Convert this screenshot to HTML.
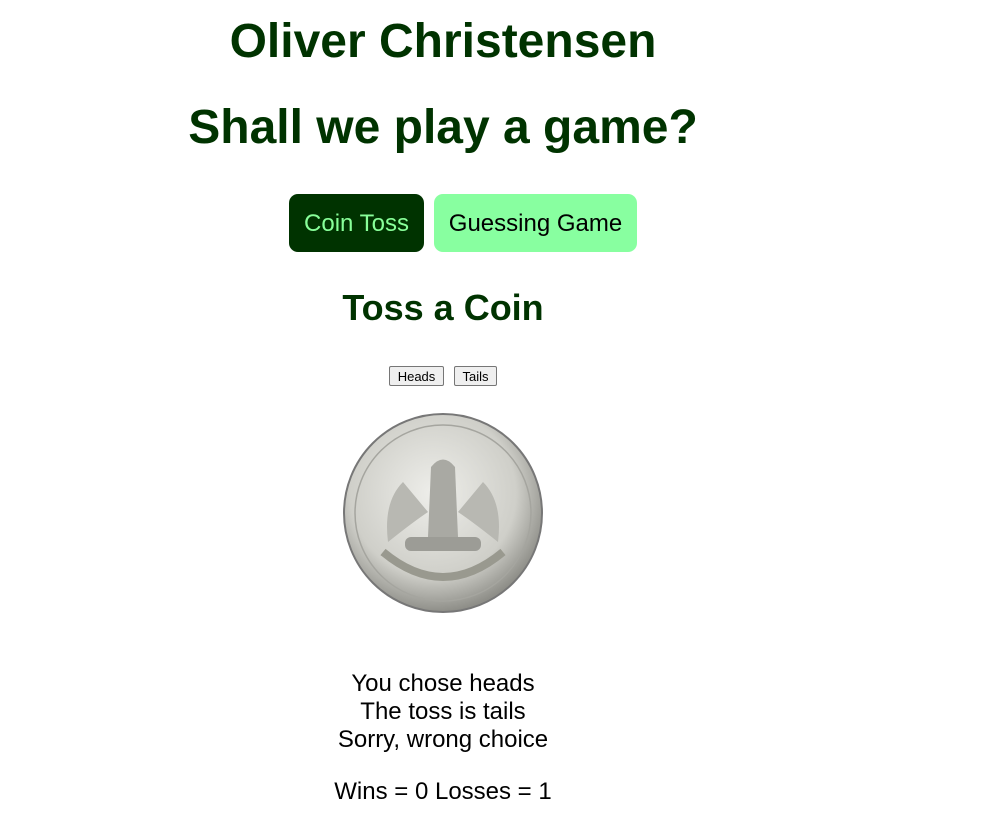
<!DOCTYPE html>
<html><head><meta charset="utf-8"><style>
body{margin:0;background:#fff;font-family:"Liberation Sans",Arial,sans-serif;width:993px;height:833px;position:relative;overflow:hidden}
.c{position:absolute;left:0;width:886px;text-align:center;white-space:nowrap}
h1{margin:0;font-size:48px;font-weight:bold;color:#003300}
.btn{position:absolute;top:194px;height:58px;border-radius:9px;font-size:24px;line-height:60px;text-align:center}
.sb{position:absolute;top:366px;height:20px;border:1px solid #767676;background:#efefef;border-radius:2px;font-size:13px;line-height:19px;text-align:center;box-sizing:border-box;color:#000}
.t{font-size:24px;color:#000}
</style></head><body>
<h1 class="c" style="top:14px">Oliver Christensen</h1>
<h1 class="c" style="top:100px">Shall we play a game?</h1>
<div class="btn" style="left:289px;width:135px;background:#003300;color:#88ff99">Coin Toss</div>
<div class="btn" style="left:434px;width:203px;background:#88ffa0;color:#000">Guessing Game</div>
<div class="c" style="top:287px;font-size:36px;font-weight:bold;color:#003300">Toss a Coin</div>
<div class="sb" style="left:389px;width:55px">Heads</div>
<div class="sb" style="left:454px;width:43px">Tails</div>
<svg style="position:absolute;left:343px;top:412px" width="202" height="202" viewBox="0 0 202 202">
<defs><radialGradient id="g" cx="45%" cy="40%" r="60%"><stop offset="0" stop-color="#eeeeea"/><stop offset="0.7" stop-color="#cfcfc9"/><stop offset="1" stop-color="#8e8e88"/></radialGradient></defs>
<circle cx="100" cy="101" r="99" fill="url(#g)" stroke="#777" stroke-width="2"/>
<circle cx="100" cy="101" r="88" fill="none" stroke="#a5a59f" stroke-width="1.5"/>
<path d="M60 70 Q40 90 45 130 Q70 110 85 100 Z M140 70 Q160 90 155 130 Q130 110 115 100 Z" fill="#b8b8b2"/>
<path d="M88 55 Q100 40 112 55 L115 125 L85 125 Z" fill="#a9a9a3"/>
<rect x="62" y="125" width="76" height="14" rx="6" fill="#9c9c96"/>
<path d="M40 140 Q100 190 160 140" fill="none" stroke="#99998f" stroke-width="8"/>
</svg>
<div class="c t" style="top:670px">You chose heads</div>
<div class="c t" style="top:698px">The toss is tails</div>
<div class="c t" style="top:726px">Sorry, wrong choice</div>
<div class="c t" style="top:778px">Wins = 0 Losses = 1</div>
</body></html>
